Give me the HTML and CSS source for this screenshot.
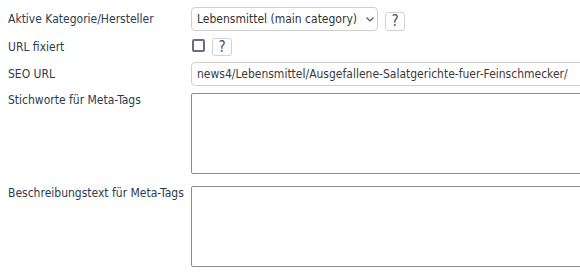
FILE: index.html
```html
<!DOCTYPE html>
<html lang="de">
<head>
<meta charset="utf-8">
<link rel="stylesheet" href="styles.css">
</head>
<body>
<div class="form">
  <div class="row row-cat">
    <label class="lbl">Aktive Kategorie/Hersteller</label>
    <div class="field">
      <div class="select-wrap">
        <select class="select"><option>Lebensmittel (main category)</option></select>
        <svg class="chev" width="8" height="5" viewBox="0 0 8 5"><path d="M0.5 0.5 L4 4 L7.5 0.5" fill="none" stroke="#555" stroke-width="1.2"/></svg>
      </div>
      <button class="help help-1" type="button">?</button>
    </div>
  </div>
  <div class="row row-check">
    <label class="lbl">URL fixiert</label>
    <div class="field field-check">
      <input class="check" type="checkbox">
      <button class="help help-2" type="button">?</button>
    </div>
  </div>
  <div class="row row-url">
    <label class="lbl">SEO URL</label>
    <div class="field">
      <input class="text" type="text" value="news4/Lebensmittel/Ausgefallene-Salatgerichte-fuer-Feinschmecker/">
    </div>
  </div>
  <div class="row row-area">
    <label class="lbl">Stichworte für Meta-Tags</label>
    <div class="field"><textarea class="area"></textarea></div>
  </div>
  <div class="row row-area row-last">
    <label class="lbl">Beschreibungstext für Meta-Tags</label>
    <div class="field"><textarea class="area"></textarea></div>
  </div>
</div>
</body>
</html>
```
FILE: styles.css
```css
html, body { margin: 0; padding: 0; background: #fff; overflow: hidden; }
body {
  font-family: "DejaVu Sans Condensed", "DejaVu Sans", sans-serif;
  font-size: 12px;
  color: #2c3b4f;
}
.form {
  width: 572px;
  padding: 7px 0 0 8px;
  display: flex;
  flex-direction: column;
  overflow: hidden;
}
.row { display: flex; align-items: center; }
.row-cat { height: 24px; }
.row-check { height: 18px; margin-top: 7px; }
.row-url { height: 24px; margin-top: 6px; }
.row-area { align-items: flex-start; margin-top: 7px; }
.row-last { margin-top: 12px; }
.lbl { width: 183px; flex: none; line-height: 14px; white-space: nowrap; }
.field { display: flex; align-items: center; flex: none; }
.field-check { align-items: flex-start; height: 18px; }

.select-wrap { position: relative; width: 187px; height: 24px; }
.select {
  appearance: none;
  -webkit-appearance: none;
  width: 187px; height: 24px;
  margin: 0;
  padding: 0 0 0 5px;
  border: 1px solid #cfcfcf;
  border-radius: 4px;
  background: #fff;
  font: inherit;
  color: #333;
}
.chev { position: absolute; left: 175px; top: 10px; }

.help {
  width: 20px; height: 19px;
  margin: 0; padding: 0;
  border: 1px solid #d2d2d2;
  border-radius: 3px;
  background: #fff;
  font: 15px "DejaVu Sans Condensed", "DejaVu Sans", sans-serif;
  color: #3a4f72;
  line-height: 17px;
}
.help-1 { margin-left: 7px; margin-top: 5px; }
.help-2 { margin-left: 7px; height: 18px; line-height: 16px; }

.check {
  appearance: none;
  -webkit-appearance: none;
  width: 13px; height: 13px;
  margin: 1px 0 0 1px;
  border: 2px solid #6d6b7e;
  border-radius: 2px;
  background: #fff;
}

.text {
  width: 400px; height: 24px;
  margin: 0;
  padding: 0 0 0 5px;
  border: 1px solid #cfcfcf;
  border-radius: 4px;
  font: inherit;
  color: #3a3a3a;
  box-sizing: border-box;
}
.area {
  display: block;
  width: 400px; height: 81px;
  margin: 0;
  padding: 2px;
  border: 1px solid #8b8b96;
  border-radius: 2px;
  box-sizing: border-box;
  resize: none;
  font: inherit;
}
```
